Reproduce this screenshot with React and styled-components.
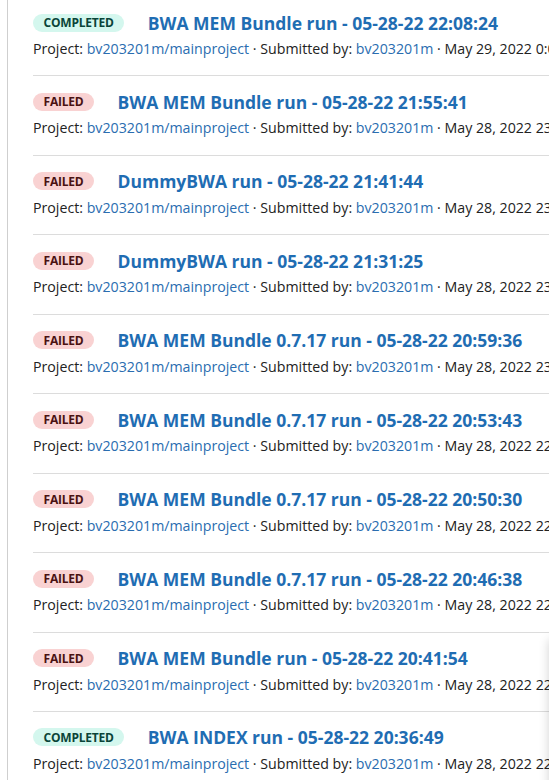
import { styled, createGlobalStyle } from "styled-components";

const runs = [
  { status: "completed", title: "BWA MEM Bundle run - 05-28-22 22:08:24", date: "May 29, 2022 0:08 AM" },
  { status: "failed", title: "BWA MEM Bundle run - 05-28-22 21:55:41", date: "May 28, 2022 23:55 PM" },
  { status: "failed", title: "DummyBWA run - 05-28-22 21:41:44", date: "May 28, 2022 23:41 PM" },
  { status: "failed", title: "DummyBWA run - 05-28-22 21:31:25", date: "May 28, 2022 23:31 PM" },
  { status: "failed", title: "BWA MEM Bundle 0.7.17 run - 05-28-22 20:59:36", date: "May 28, 2022 23:00 PM" },
  { status: "failed", title: "BWA MEM Bundle 0.7.17 run - 05-28-22 20:53:43", date: "May 28, 2022 22:53 PM" },
  { status: "failed", title: "BWA MEM Bundle 0.7.17 run - 05-28-22 20:50:30", date: "May 28, 2022 22:50 PM" },
  { status: "failed", title: "BWA MEM Bundle 0.7.17 run - 05-28-22 20:46:38", date: "May 28, 2022 22:46 PM" },
  { status: "failed", title: "BWA MEM Bundle run - 05-28-22 20:41:54", date: "May 28, 2022 22:41 PM" },
  { status: "completed", title: "BWA INDEX run - 05-28-22 20:36:49", date: "May 28, 2022 22:36 PM" },
];

const GlobalStyle = createGlobalStyle`
  html, body {
    margin: 0;
    padding: 0;
    background: #fff;
    overflow: hidden;
  }
  body {
    font-family: "Open Sans", "Noto Sans", sans-serif;
    color: #222;
  }
`;

const App = () => {
  return (
    <>
      <GlobalStyle />
      <Page>
        <List>
          {runs.map((run) => (
            <Item key={run.title}>
              <TitleRow>
                <Badge $status={run.status}>{run.status}</Badge>
                <Title href="#">{run.title}</Title>
              </TitleRow>
              <Meta>
                Project: <MetaLink href="#">bv203201m/mainproject</MetaLink>
                {" · "}Submitted by: <MetaLink href="#">bv203201m</MetaLink>
                {" · "}
                {run.date}
              </Meta>
            </Item>
          ))}
        </List>
        <Panel />
      </Page>
    </>
  );
};

const Page = styled.div`
  position: relative;
  width: 549px;
  height: 780px;
  overflow: hidden;
  padding-left: 7px;
  box-sizing: border-box;
`;

const List = styled.div`
  min-height: 800px;
  margin-top: -3px;
  border-left: 1px solid #cfcfcf;
  padding-left: 25px;
  display: flex;
  flex-direction: column;
`;

const Item = styled.div`
  display: flex;
  flex-direction: column;
  gap: 4.5px;
  padding: 13.5px 0 16.44px;
  border-bottom: 1px solid #dcdcdc;
`;

const TitleRow = styled.div`
  display: flex;
  align-items: center;
  gap: 23.5px;
  height: 24px;
  white-space: nowrap;
`;

const Badge = styled.span`
  display: inline-flex;
  align-items: center;
  height: 18px;
  padding: 0 10.5px;
  border-radius: 9px;
  font-size: 12px;
  font-weight: 700;
  text-transform: uppercase;
  letter-spacing: -0.2px;
  background: ${(p) => (p.$status === "completed" ? "#d4f7ee" : "#f9d2d2")};
  color: ${(p) => (p.$status === "completed" ? "#0a4438" : "#4a1212")};
`;

const Title = styled.a`
  font-size: 17.5px;
  font-weight: 700;
  color: #1f6db3;
  text-decoration: none;
  line-height: 24px;
`;

const Meta = styled.div`
  font-size: 14.2px;
  line-height: 20px;
  white-space: nowrap;
  color: #222;
`;

const MetaLink = styled.a`
  color: #2a6db0;
  text-decoration: none;
`;

const Panel = styled.div`
  position: absolute;
  left: 549px;
  top: 640px;
  width: 300px;
  height: 300px;
  box-shadow: 0 0 10px rgba(0, 0, 0, 0.18);
`;

export default App;
